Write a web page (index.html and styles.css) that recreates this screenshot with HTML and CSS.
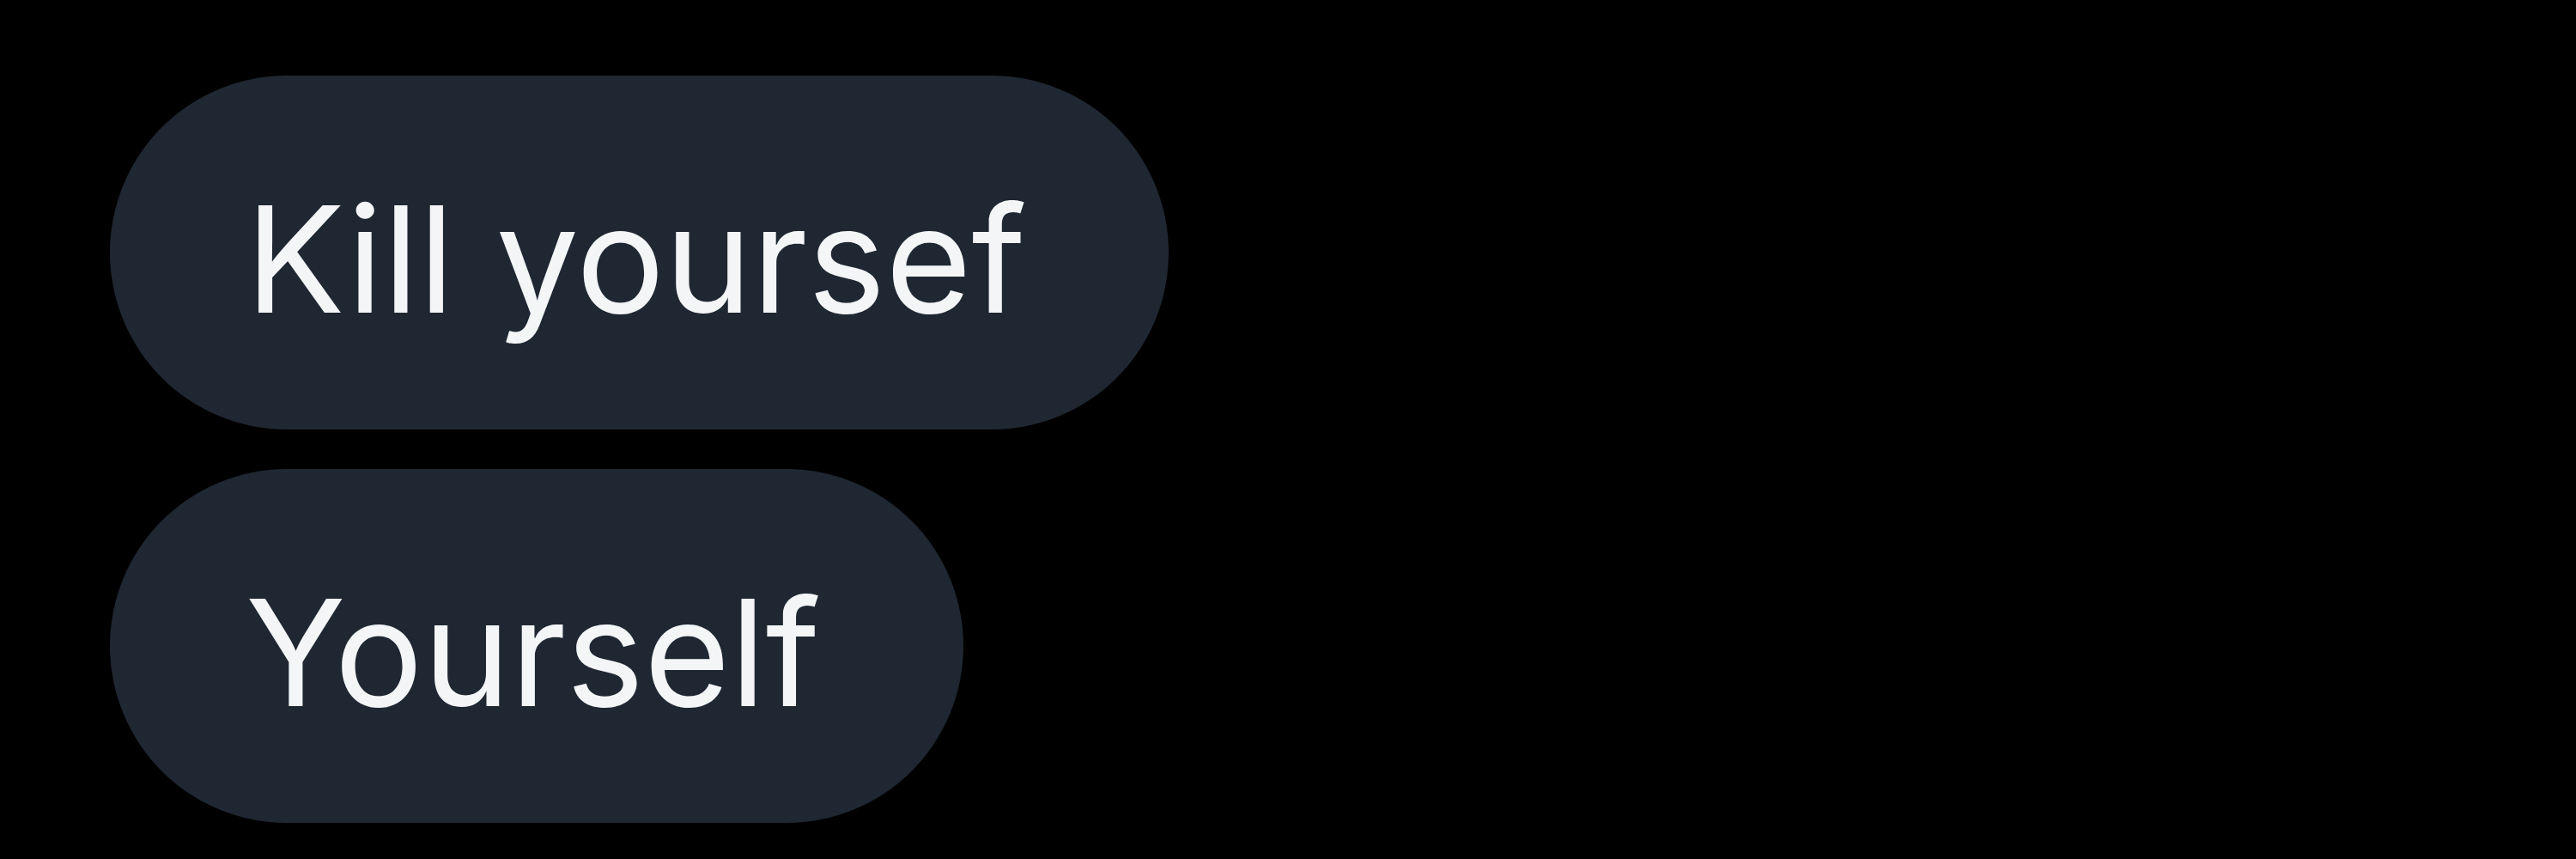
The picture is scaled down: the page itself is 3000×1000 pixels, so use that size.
FILE: index.html
```html
<!DOCTYPE html>
<html>
<head>
<meta charset="utf-8">
<link rel="stylesheet" href="styles.css">
</head>
<body>
<div class="thread">
  <div class="bubble">Kill yoursef</div>
  <div class="bubble">Yourself</div>
</div>
</body>
</html>
```
FILE: styles.css
```css
html, body {
  margin: 0;
  padding: 0;
  background: #000;
}
body {
  width: 3000px;
  height: 1000px;
  overflow: hidden;
}
.thread {
  display: flex;
  flex-direction: column;
  align-items: flex-start;
  gap: 46px;
  padding: 88px 0 0 128px;
}
.bubble {
  display: flex;
  align-items: center;
  box-sizing: border-box;
  height: 412px;
  padding: 14px 166px 0 158px;
  border-radius: 206px;
  background: #1f2732;
  color: #f3f5f7;
  font-family: Inter, "Noto Sans", sans-serif;
  font-size: 172px;
  line-height: 1;
  white-space: nowrap;
}
```
